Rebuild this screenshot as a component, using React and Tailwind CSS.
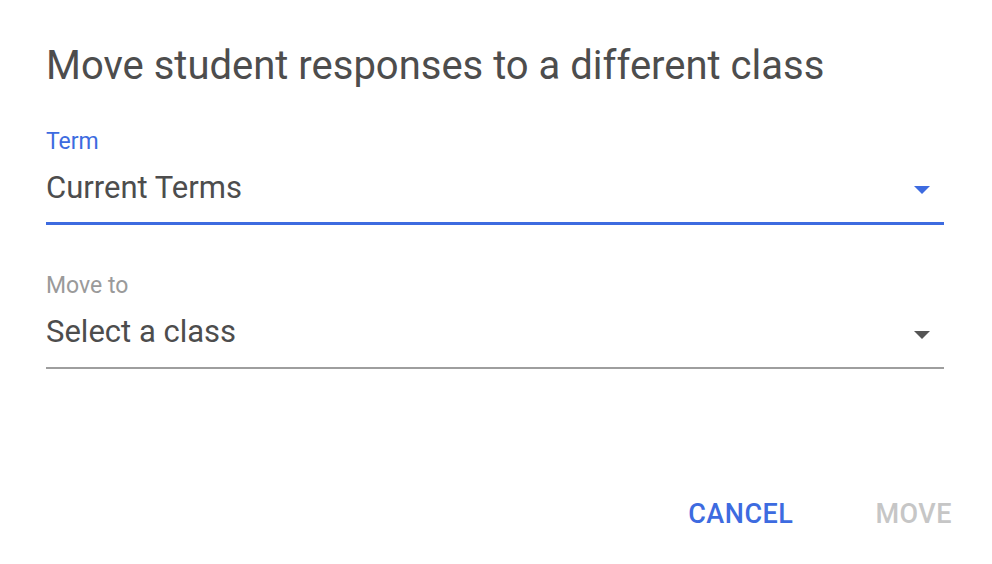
export default function App() {
  return (
    <div className="h-[564px] w-[992px] bg-white font-['Roboto',sans-serif]">
      <div className="flex h-full flex-col pl-[46px] pr-[48px] pt-[40px]">
        <h1 className="text-[40px] leading-[52px] text-[#4d4d4d]">Move student responses to a different class</h1>

        <div className="mt-[35px]">
          <div className="text-[23px] leading-[30px] text-[#3d6be0]">Term</div>
          <div className="mt-[11px] flex items-center justify-between border-b-[3px] border-[#3d6be0] pb-[14px]">
            <span className="text-[31px] leading-[40px] text-[#4d4d4d]">Current Terms</span>
            <svg width="16" height="8" viewBox="0 0 16 8" className="mr-[14px] mt-[4px]">
              <path d="M0 0h16L8 8z" fill="#3d6be0" />
            </svg>
          </div>
        </div>

        <div className="mt-[46px]">
          <div className="text-[23px] leading-[30px] text-[#9a9a9a]">Move to</div>
          <div className="mt-[11px] flex items-center justify-between border-b-2 border-[#9e9e9e] pb-[15px]">
            <span className="text-[31px] leading-[40px] text-[#4d4d4d]">Select a class</span>
            <svg width="16" height="8" viewBox="0 0 16 8" className="mr-[14px] mt-[6px]">
              <path d="M0 0h16L8 8z" fill="#555555" />
            </svg>
          </div>
        </div>

        <div className="mt-auto mb-[30px] flex justify-end gap-[82px]">
          <button className="text-[27px] font-medium tracking-[0.5px] text-[#3d6be0]">CANCEL</button>
          <button className="mr-[-8px] text-[27px] font-medium tracking-[0.5px] text-[#c6c6c6]">MOVE</button>
        </div>
      </div>
    </div>
  );
}
